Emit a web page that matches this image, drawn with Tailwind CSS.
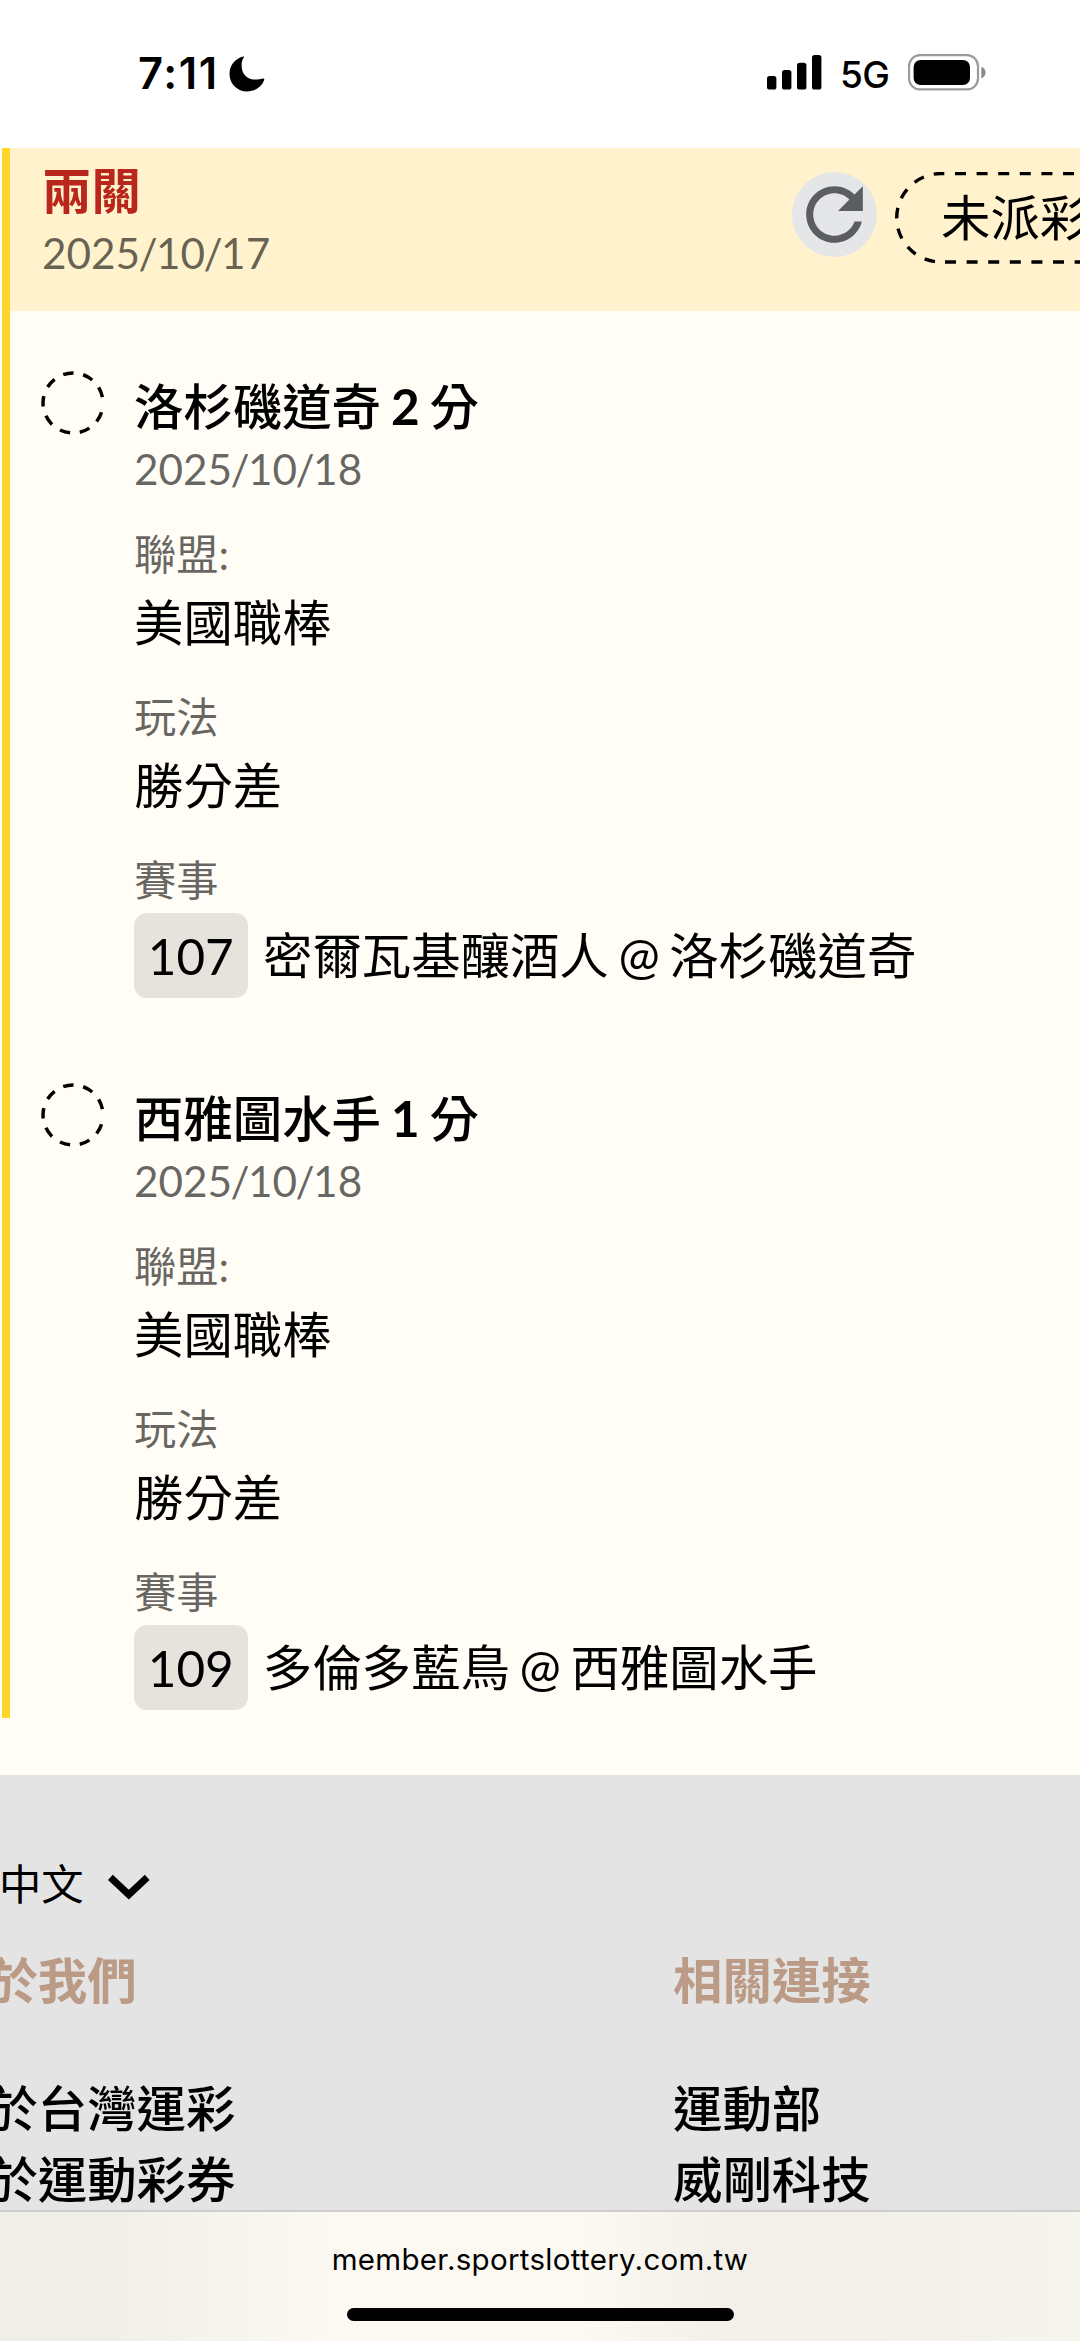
<!DOCTYPE html>
<html lang="zh-Hant-TW">
<head>
  <meta charset="UTF-8" />
  <meta name="viewport" content="width=device-width, initial-scale=1.0" />
  <title>台灣運彩</title>
  <script src="https://cdn.jsdelivr.net/npm/@tailwindcss/browser@4"></script>
</head>
<body class="bg-[#fffdf5] w-[1080px] h-[2341px] overflow-hidden flex flex-col text-black text-[49.4px] font-['Lato','Noto_Sans_CJK_TC',sans-serif]">
  <!-- Status bar -->
  <div class="h-[148px] shrink-0 bg-white flex justify-between pl-[138px] pr-[94px] font-['Inter',sans-serif]">
    <div class="flex items-center gap-[11px]">
      <span class="w-[80px] whitespace-nowrap text-[43.5px] font-semibold leading-none tracking-[1.6px] -mt-[1px]">7:11</span>
      <svg class="w-[36px] h-[36px]" viewBox="0 0 36 36"><path d="M14.2 0.6C5.8 2.8 0.5 9.6 0.5 18C0.5 28 8.5 35.5 18 35.5C26 35.5 32.6 31 35.2 24C35.6 22.8 34.8 22.2 33.6 22.6C31.4 23.4 29.4 23.6 27 23.6C18 23.6 12.6 18 12.6 9.4C12.6 6.6 13 4.4 14.2 2.4C14.9 1.2 15.4 0.3 14.2 0.6Z"/></svg>
    </div>
    <div class="flex items-center">
      <svg class="w-[55px] h-[35px] -mt-[3px]" viewBox="0 0 55 35">
        <rect x="0" y="21" width="9.4" height="13.5" rx="2.6"/>
        <rect x="15" y="15" width="9.4" height="19.5" rx="2.6"/>
        <rect x="30" y="7.7" width="9.4" height="26.8" rx="2.6"/>
        <rect x="45" y="0" width="9.4" height="34.5" rx="2.6"/>
      </svg>
      <span class="ml-[18px] text-[37px] font-medium leading-none tracking-[-0.8px]">5G</span>
      <svg class="ml-[19px] w-[78px] h-[37px] -mt-[3px]" viewBox="0 0 78 37">
        <rect x="1" y="1.2" width="69" height="34.2" rx="11" fill="none" stroke="#9b9b9b" stroke-width="2.2"/>
        <rect x="5.6" y="6" width="56.4" height="25" rx="7"/>
        <path d="M73.3 12.8C79 14.6 79 22.6 73.3 24.4Z" fill="#8b8b8b"/>
      </svg>
    </div>
  </div>

  <!-- Bet slip -->
  <main class="pl-[2px] h-[1570px] shrink-0">
    <div class="border-l-[8px] border-[#ffd529] h-full">
      <header class="h-[163px] bg-[#fff2cc] flex overflow-hidden">
        <div class="pl-[32px] pt-[12px] w-[782px] shrink-0">
          <h1 class="font-bold text-[#b9261b] leading-[60px]">兩關</h1>
          <p class="text-[42.3px] leading-[65px] text-black/60">2025<span class="-mx-[1.6px]">/</span>10<span class="-mx-[1.6px]">/</span>17</p>
        </div>
        <button class="mt-[24px] w-[85px] h-[85px] shrink-0 rounded-full bg-[#e5e6e8]">
          <svg class="w-[85px] h-[85px]" viewBox="0 0 24 24" fill="#5c5d5f"><path d="M17.65 6.35C16.2 4.9 14.21 4 12 4c-4.42 0-7.99 3.58-7.99 8s3.57 8 7.99 8c3.73 0 6.84-2.55 7.73-6h-2.08c-.82 2.33-3.04 4-5.65 4-3.31 0-6-2.69-6-6s2.69-6 6-6c1.66 0 3.14.69 4.22 1.78L13 11h7V4l-2.35 2.35z"/></svg>
        </button>
        <div class="relative ml-[18px] mt-[24px] h-[92px] shrink-0 pl-[46px]">
          <svg class="absolute left-0 top-0 w-[185px] h-[92px]" viewBox="895 172 185 92" fill="none" stroke="#000" stroke-width="3.4">
            <path d="M1095.6 173.6H955" stroke-dasharray="11 10.6"/>
            <path d="M944.3 173.6H940.9A44.2 44.2 0 0 0 940.9 262H944" stroke-dasharray="10.6 10.3"/>
            <path d="M945 262H1100" stroke-dasharray="11 10.6"/>
          </svg>
          <span class="leading-[90px] whitespace-nowrap">未派彩</span>
        </div>
      </header>

      <!-- Leg 1 -->
      <section class="flex pt-[66px]">
        <svg class="ml-[31px] mt-[-6px] w-[64px] h-[64px] shrink-0" viewBox="0 0 64 64" fill="none" stroke="#000" stroke-width="3.5"><circle cx="32" cy="32" r="30" stroke-dasharray="10.5 9.8" stroke-dashoffset="-9.4"/></svg>
        <div class="ml-[29px]">
          <h2 class="font-medium leading-[58px] [word-spacing:-2.5px]">洛杉磯道奇 <span class="font-bold">2</span> 分</h2>
          <p class="text-[42.3px] leading-[68px] text-black/60">2025<span class="-mx-[1.6px]">/</span>10<span class="-mx-[1.6px]">/</span>18</p>
          <p class="mt-[23px] text-[42.3px] leading-[55px] text-black/60">聯盟:</p>
          <p class="leading-[83px]">美國職棒</p>
          <p class="mt-[25px] text-[42.3px] leading-[55px] text-black/60">玩法</p>
          <p class="leading-[83px]">勝分差</p>
          <p class="mt-[25px] text-[42.3px] leading-[55px] text-black/60">賽事</p>
          <div class="mt-[6px] flex items-center">
            <span class="-ml-[0.5px] w-[114.5px] h-[85px] rounded-[13px] bg-black/10 text-center leading-[87px]">107</span>
            <span class="ml-[15px] leading-[85px] [word-spacing:-3px]">密爾瓦基釀酒人 @ 洛杉磯道奇</span>
          </div>
        </div>
      </section>

      <!-- Leg 2 -->
      <section class="flex pt-[91px]">
        <svg class="ml-[31px] mt-[-6px] w-[64px] h-[64px] shrink-0" viewBox="0 0 64 64" fill="none" stroke="#000" stroke-width="3.5"><circle cx="32" cy="32" r="30" stroke-dasharray="10.5 9.8" stroke-dashoffset="-9.4"/></svg>
        <div class="ml-[29px]">
          <h2 class="font-medium leading-[58px] [word-spacing:-2.5px]">西雅圖水手 <span class="font-bold">1</span> 分</h2>
          <p class="text-[42.3px] leading-[68px] text-black/60">2025<span class="-mx-[1.6px]">/</span>10<span class="-mx-[1.6px]">/</span>18</p>
          <p class="mt-[23px] text-[42.3px] leading-[55px] text-black/60">聯盟:</p>
          <p class="leading-[83px]">美國職棒</p>
          <p class="mt-[25px] text-[42.3px] leading-[55px] text-black/60">玩法</p>
          <p class="leading-[83px]">勝分差</p>
          <p class="mt-[25px] text-[42.3px] leading-[55px] text-black/60">賽事</p>
          <div class="mt-[6px] flex items-center">
            <span class="-ml-[0.5px] w-[114.5px] h-[85px] rounded-[13px] bg-black/10 text-center leading-[87px]">109</span>
            <span class="ml-[15px] leading-[85px] [word-spacing:-3px]">多倫多藍鳥 @ 西雅圖水手</span>
          </div>
        </div>
      </section>
    </div>
  </main>

  <!-- Site footer -->
  <footer class="mt-[57px] h-[435px] shrink-0 overflow-hidden bg-[#e4e4e4] pt-[79px]">
    <div class="-ml-px flex items-center h-[60px] text-[42.3px]">
      <span class="leading-[60px]">中文</span>
      <svg class="ml-[23px] mt-[6px] w-[44px] h-[26px]" viewBox="0 0 44 26" fill="none" stroke="#000" stroke-width="7"><path d="M3.4 3.4L21.8 20.6L40.2 3.4"/></svg>
    </div>
    <div class="flex">
      <div class="ml-[-61px] w-[734px] shrink-0 pt-[31px]">
        <h3 class="font-bold leading-[71px] text-[#bb9a86]">關於我們</h3>
        <ul class="mt-[57px] font-medium leading-[71px]">
          <li>關於台灣運彩</li>
          <li>關於運動彩券</li>
        </ul>
      </div>
      <div class="pt-[31px]">
        <h3 class="font-bold leading-[71px] text-[#bb9a86]">相關連接</h3>
        <ul class="mt-[57px] font-medium leading-[71px]">
          <li>運動部</li>
          <li>威剛科技</li>
        </ul>
      </div>
    </div>
  </footer>

  <!-- Browser bar -->
  <div class="h-[131px] shrink-0 border-t-2 border-[#cdcdcb] bg-[linear-gradient(90deg,#efeee8_9%,#fbf9f2_30%,#fcf9f2_54%,#f2f0e9_67%,#f2f0e9_82%,#f5f4ed)] flex flex-col items-center font-['Inter',sans-serif]">
    <span class="mt-[27px] text-[29.5px] leading-[40px] tracking-[0.3px]">member.sportslottery.com.tw</span>
    <div class="mt-[29px] w-[387px] h-[13px] rounded-full bg-black"></div>
  </div>
</body>
</html>
